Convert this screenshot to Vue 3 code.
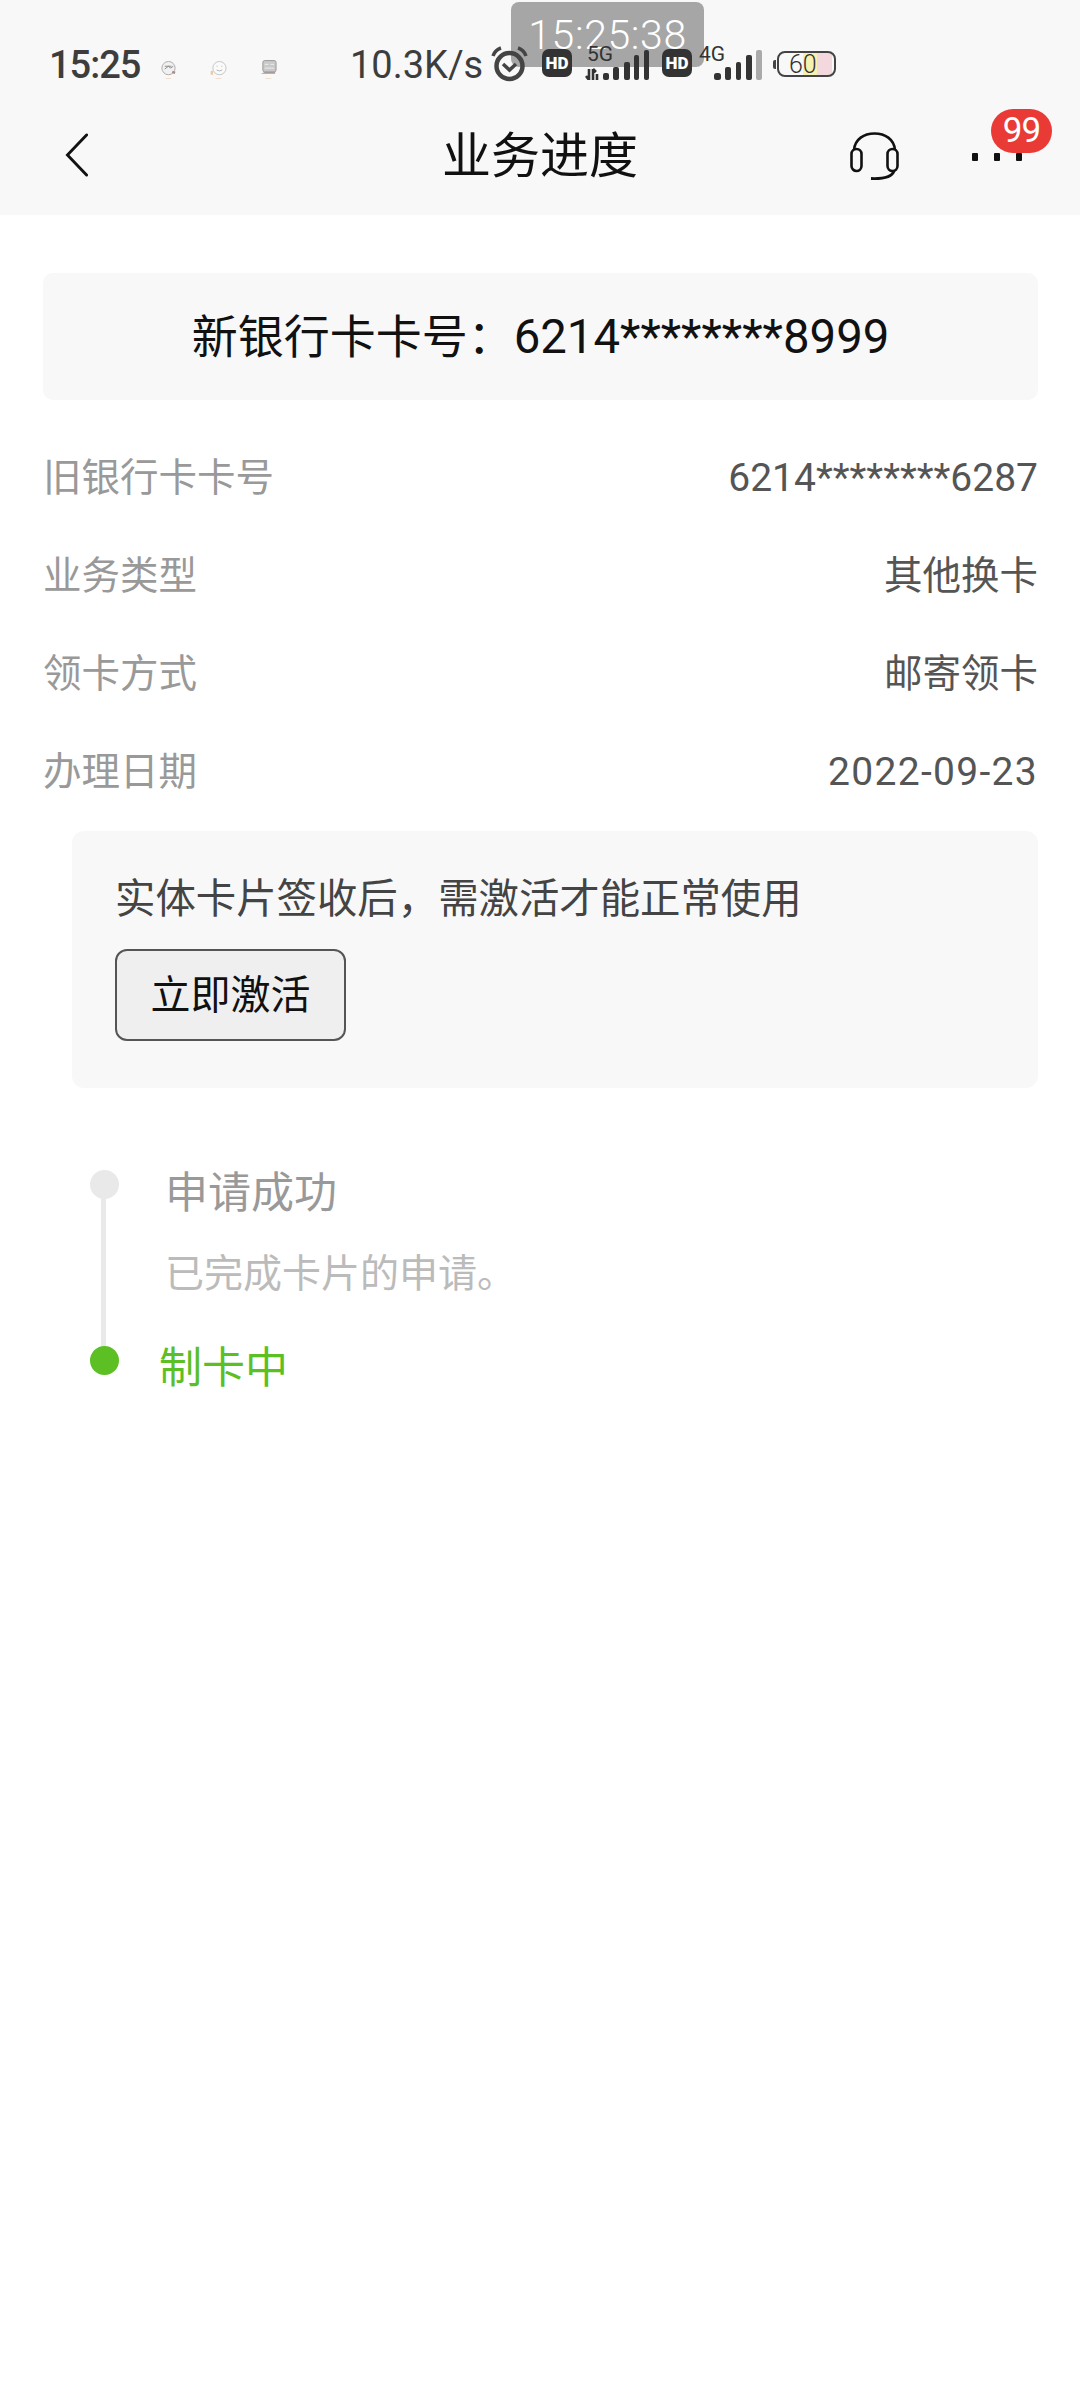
<script setup>
const rows = [
  { label: '旧银行卡卡号', value: '6214********6287', kind: 'num' },
  { label: '业务类型', value: '其他换卡', kind: '' },
  { label: '领卡方式', value: '邮寄领卡', kind: '' },
  { label: '办理日期', value: '2022-09-23', kind: 'num date' },
]
</script>

<template>
  <div class="page">
    <header class="top">
      <div class="clock-pill">15:25:38</div>
      <div class="status">
        <span class="clock">15:25</span>
        <div class="notes">
          <svg class="note" viewBox="0 0 18 22"><circle cx="9" cy="9" r="7" fill="#f1f1f1" stroke="#aaa"/><path d="M5 10l4-3 2 2 3-2M5 7h7" stroke="#888" fill="none"/><path d="M13 13l3 1" stroke="#a88" stroke-width="2.5"/><path d="M6 20h6" stroke="#edc"/></svg>
          <svg class="note" viewBox="0 0 18 22"><circle cx="10" cy="9" r="7" fill="#fafafa" stroke="#c4c4c4"/><path d="M7 7h1M12 7h1M7 11q3 2 6 0" stroke="#b0b0b0" fill="none"/><path d="M2 12v4" stroke="#ecc9a0" stroke-width="2.5"/><path d="M6 20h6" stroke="#edc"/></svg>
          <svg class="note" viewBox="0 0 18 22"><rect x="3" y="1" width="14" height="12" rx="2" fill="#c9c9c9" stroke="#999"/><path d="M5 5h4M11 5h4M5 9h10" stroke="#eee"/><path d="M1 15l4-2h11v2z" fill="#a99"/><path d="M6 20h6" stroke="#edc"/></svg>
        </div>
        <span class="speed">10.3K/s</span>
        <svg class="alarm" viewBox="0 0 37 36"><circle cx="18.5" cy="20" r="13" fill="none" stroke="#444" stroke-width="4.5"/><path d="M12 18l6.5 6 6.5-6" fill="none" stroke="#444" stroke-width="3.5"/><path d="M2 10Q4 4 10 2M35 10Q33 4 27 2" fill="none" stroke="#444" stroke-width="3.5"/></svg>
        <span class="hd">HD</span>
        <div class="net net-5g">
          <span class="net-label">5G</span>
          <svg viewBox="0 0 64 30"><path d="M4 19v11M1 26l3 4M8 30V19M8 19l3 3 M12 24v6" stroke="#333" stroke-width="2.6" fill="none"/><g fill="#333"><rect x="18" y="23" width="6" height="7" rx="2"/><rect x="28" y="17" width="6" height="13" rx="2"/><rect x="39" y="12" width="6" height="18" rx="2"/><rect x="49" y="5" width="5" height="25" rx="2"/><rect x="59" y="0" width="5" height="30" rx="2"/></g></svg>
        </div>
        <span class="hd hd2">HD</span>
        <div class="net net-4g">
          <span class="net-label">4G</span>
          <svg viewBox="0 0 48 30"><g fill="#333"><rect x="0" y="23" width="7" height="7" rx="2.5"/><rect x="11" y="17" width="6" height="13" rx="2"/><rect x="22" y="12" width="5" height="18" rx="2"/><rect x="32" y="5" width="6" height="25" rx="2"/></g><rect x="42" y="0" width="6" height="30" rx="2" fill="#aaa"/></svg>
        </div>
        <div class="battery-wrap">
          <span class="nub"></span>
          <div class="battery"><span>60</span></div>
        </div>
      </div>
      <nav class="nav">
        <div class="nav-left">
          <svg class="back" viewBox="0 0 24 46"><path d="M22 2L2 23l20 21" fill="none" stroke="#111" stroke-width="3" stroke-linecap="round"/></svg>
        </div>
        <h1 class="title">业务进度</h1>
        <div class="nav-right">
          <svg class="headset" viewBox="0 0 49 48"><path d="M4 18C5 7 14 1.5 24.5 1.5S44 7 45 18" fill="none" stroke="#111" stroke-width="2.6"/><rect x="1.5" y="17" width="10" height="22" rx="5" fill="none" stroke="#111" stroke-width="2.6"/><rect x="37.5" y="17" width="10" height="22" rx="5" fill="none" stroke="#111" stroke-width="2.6"/><path d="M44 39c-2 6-10 8-23 7.500" fill="none" stroke="#111" stroke-width="2.8"/></svg>
          <div class="more">
            <i></i><i></i><i></i>
            <span class="badge">99</span>
          </div>
        </div>
      </nav>
    </header>

    <main class="content">
      <div class="card-no">新银行卡卡号：<span class="card-num">6214********8999</span></div>
      <div class="rows">
        <div v-for="row in rows" :key="row.label" class="row">
          <span class="label">{{ row.label }}</span>
          <span class="value" :class="row.kind">{{ row.value }}</span>
        </div>
      </div>
      <section class="notice">
        <p class="notice-text">实体卡片签收后，需激活才能正常使用</p>
        <button class="activate" type="button">立即激活</button>
      </section>
      <ol class="timeline">
        <li class="step done">
          <span class="dot"></span>
          <div class="step-title">申请成功</div>
          <div class="step-desc">已完成卡片的申请。</div>
        </li>
        <li class="step current">
          <span class="dot"></span>
          <div class="step-title">制卡中</div>
        </li>
      </ol>
    </main>
  </div>
</template>

<style scoped>
.page {
  width: 1080px;
  height: 2400px;
  background: #fff;
  font-family: "Noto Sans CJK SC", "Noto Sans", sans-serif;
  overflow: hidden;
}
.top {
  position: relative;
  height: 215px;
  background: #f8f8f8;
}
.status {
  position: relative;
  height: 110px;
  display: flex;
  align-items: flex-start;
  padding-left: 49px;
  box-sizing: border-box;
  color: #3d3d3d;
  font-family: Roboto, sans-serif;
}
.clock { width: 111px; font-size: 38px; line-height: 46px; margin-top: 42px; font-weight: 500; letter-spacing: -1px; }
.notes { display: flex; gap: 33px; width: 190px; margin-top: 59px; }
.note { width: 17px; height: 22px; flex: none; }
.speed { width: 141px; font-size: 38px; line-height: 46px; margin-top: 42px; }
.alarm { width: 37px; height: 36px; margin-top: 46px; flex: none; }
.hd {
  flex: none;
  width: 30px;
  height: 28px;
  margin: 49px 0 0 14px;
  background: #333;
  color: #fff;
  border-radius: 7px;
  font-size: 17px;
  font-weight: 900;
  line-height: 28px;
  text-align: center;
}
.hd2 { margin-left: 13px; }
.net { position: relative; flex: none; }
.net-label { position: absolute; font-size: 21px; line-height: 18px; color: #333; }
.net-5g { width: 64px; height: 30px; margin: 50px 0 0 13px; }
.net-5g svg { width: 64px; height: 30px; display: block; }
.net-5g .net-label { left: 2px; top: -5px; }
.net-4g { width: 48px; height: 30px; margin: 50px 0 0 22px; }
.net-4g svg { width: 48px; height: 30px; display: block; }
.net-4g .net-label { left: -15px; top: -5px; }
.battery-wrap { display: flex; align-items: center; margin: 51px 0 0 11px; flex: none; }
.nub { width: 3px; height: 9px; background: #444; border-radius: 2px 0 0 2px; }
.battery {
  width: 59px;
  height: 26px;
  margin-left: 1px;
  box-sizing: border-box;
  border: 2px solid #444;
  border-radius: 8px;
  background: linear-gradient(90deg, #f8f8f8 0 24px, #f7f1b0 24px 38px, #f3d9de 38px 53px, #f8f8f8 53px);
  font-size: 25px;
  font-weight: 300;
  line-height: 23px;
  color: #333;
  padding-left: 10px;
}
.nav {
  height: 105px;
  display: grid;
  grid-template-columns: 1fr auto 1fr;
}
.nav-left { padding: 23px 0 0 65px; }
.back { display: block; width: 24px; height: 44px; }
.title {
  margin: 0;
  padding-top: 9px;
  font-size: 49px;
  line-height: 66px;
  font-weight: 400;
  color: #111;
}
.nav-right {
  display: flex;
  justify-content: flex-end;
  align-items: flex-start;
  gap: 73px;
  padding-right: 58px;
}
.headset { width: 49px; height: 48px; margin-top: 22px; flex: none; }
.more { position: relative; display: flex; gap: 16px; margin-top: 43px; }
.more i { width: 6px; height: 8px; background: #111; border-radius: 1px; }
.badge {
  position: absolute;
  left: 19px;
  top: -44px;
  width: 61px;
  height: 44px;
  border-radius: 22px;
  background: #e93a36;
  color: #fff;
  font-family: Roboto, sans-serif;
  font-size: 35px;
  line-height: 44px;
  letter-spacing: -1px;
  text-align: center;
}
.clock-pill {
  position: absolute;
  left: 511px;
  top: 2px;
  width: 193px;
  height: 65px;
  border-radius: 8px;
  background: #a6a6a6;
  color: #fff;
  font-family: Roboto, sans-serif;
  font-weight: 300;
  font-size: 41px;
  line-height: 66px;
  text-align: center;
  letter-spacing: 0.6px;
}
.content { padding: 58px 42px 0 43px; }
.card-no {
  height: 127px;
  background: #f8f8f8;
  border-radius: 10px;
  color: #111;
  font-size: 46px;
  line-height: 121px;
  text-align: center;
}
.card-num { font-family: Roboto, sans-serif; font-size: 47.3px; }
.rows { padding-top: 25px; }
.row {
  height: 98px;
  display: flex;
  justify-content: space-between;
  align-items: center;
  font-size: 38.5px;
}
.label { color: #999; }
.value { color: #555; }
.num { font-family: Roboto, sans-serif; font-size: 39px; padding-top: 8px; }
.date { letter-spacing: 1.3px; }
.notice {
  margin: 14px 0 0 29px;
  height: 257px;
  box-sizing: border-box;
  padding: 35px 0 0 43px;
  background: #f8f8f8;
  border-radius: 12px;
}
.notice-text { margin: 0; font-size: 40.4px; line-height: 60px; color: #444; }
.activate {
  display: block;
  width: 231px;
  height: 92px;
  margin-top: 23px;
  padding: 0 0 6px;
  background: #efefef;
  border: 2px solid #555;
  border-radius: 12px;
  font: inherit;
  font-size: 40px;
  color: #111;
}
.timeline { list-style: none; margin: 82px 0 0; padding: 0 0 0 47px; }
.step { position: relative; padding-left: 75px; display: flow-root; }
.step.done { height: 176px; }
.dot { position: absolute; left: 0; top: 0; width: 29px; height: 29px; border-radius: 50%; }
.done .dot { background: #e9e9e9; }
.done::before {
  content: "";
  position: absolute;
  left: 11px;
  top: 20px;
  bottom: -10px;
  width: 5px;
  background: #e9e9e9;
}
.current .dot { background: #5cbf24; }
.step-title { font-size: 43px; line-height: 46px; color: #999; margin-top: -4px; }
.step-desc { margin-top: 36px; font-size: 39px; line-height: 44px; color: #bbb; }
.current { padding-left: 69px; }
.current .step-title { color: #5cbf24; font-size: 43px; margin-top: -5px; }
</style>
